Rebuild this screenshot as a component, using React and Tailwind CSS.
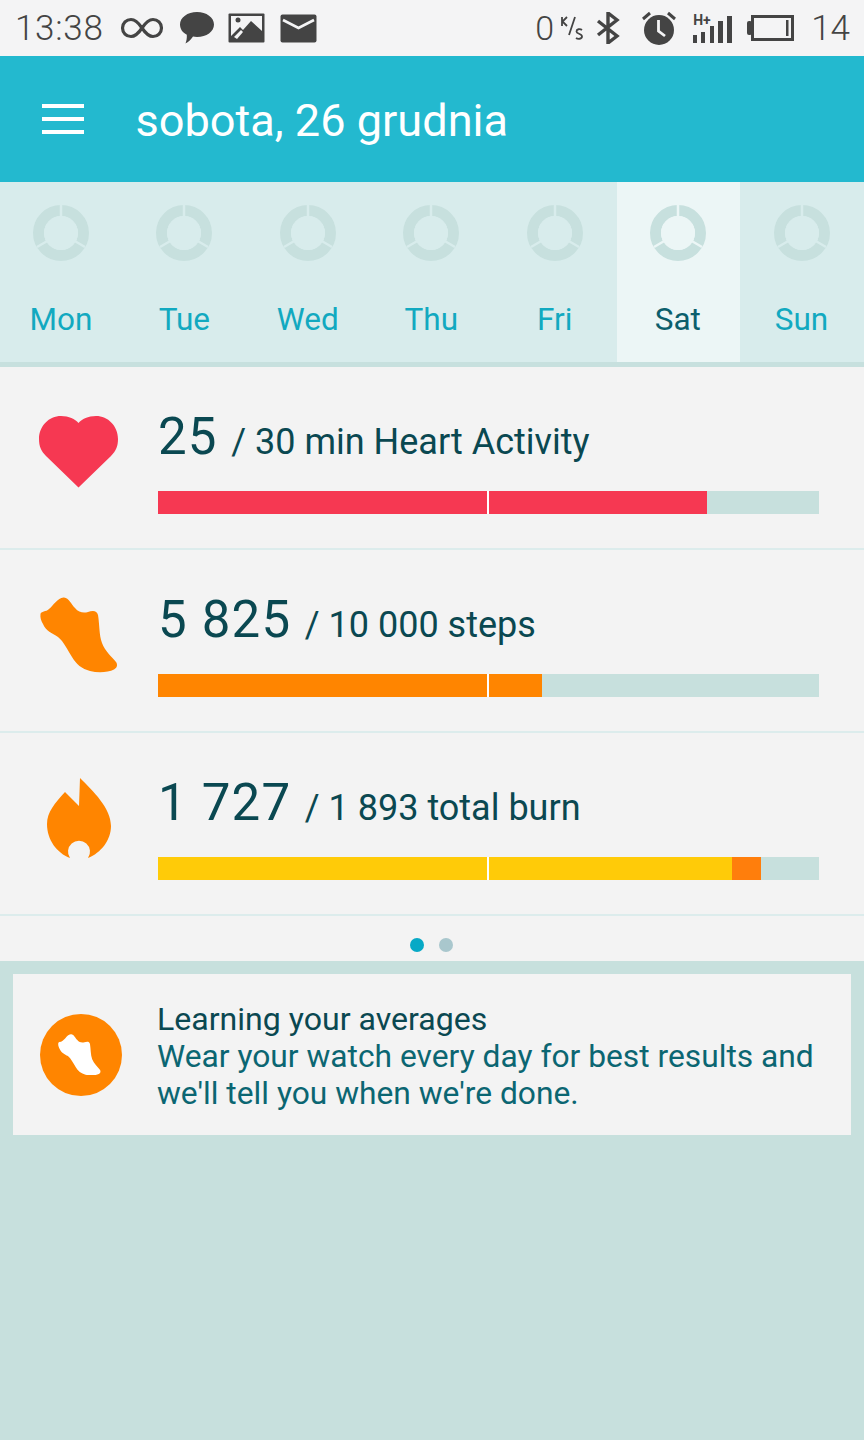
import React from 'react';

const days = ['Mon', 'Tue', 'Wed', 'Thu', 'Fri', 'Sat', 'Sun'];

function Ring() {
  return (
    <svg width="58" height="58" viewBox="0 0 58 58">
      <circle cx="29" cy="29" r="22.5" fill="none" stroke="#c7e0de" strokeWidth="11" />
      <path d="M29 0V16M29 29L53 43M29 29L5 43" stroke="currentColor" strokeWidth="2.5" fill="none" />
      <circle cx="29" cy="29" r="17" fill="currentColor" />
    </svg>
  );
}

function StatusBar() {
  return (
    <div className="h-[56px] bg-[#f4f4f5] flex items-center text-[#444] pl-[15px] pr-[14px]">
      <span className="text-[35px] font-light leading-none tracking-[0.7px]">13:38</span>
      <svg className="ml-[16px]" width="44" height="24" viewBox="0 0 44 24" fill="none" stroke="#444" strokeWidth="3.2">
        <path d="M22 12C18 6 15 3.500 11 3.500A8.500 8.500 0 0 0 11 20.500C15 20.500 18 18 22 12C26 6 29 3.500 33 3.500A8.500 8.500 0 0 1 33 20.500C29 20.500 26 18 22 12Z" />
      </svg>
      <svg className="ml-[15px]" width="36" height="34" viewBox="0 0 36 34" fill="#444">
        <path d="M18 1C27.500 1 35 6.500 35 13.500C35 20.500 27.500 26 18 26C16.500 26 15 25.800 14 25.500C12.500 28 10 30.500 6.500 32.500C7.500 30 8 27.500 7.800 23.800C3.500 21.500 1 17.800 1 13.500C1 6.500 8.500 1 18 1Z" />
      </svg>
      <svg className="ml-[13px]" width="37" height="30" viewBox="0 0 37 30">
        <rect x="0.500" y="0.500" width="36" height="29" rx="1" fill="#444" />
        <rect x="3" y="3" width="31" height="24" fill="#f4f4f5" />
        <path d="M3 27V23L12 14L15 17L23 8L34 18V27Z" fill="#444" />
        <circle cx="10" cy="7" r="2.500" fill="#444" />
        <path d="M6 24L13 17L15 19L9 26Z" fill="#f4f4f5" />
      </svg>
      <svg className="ml-[15px]" width="37" height="29" viewBox="0 0 37 29">
        <rect x="0.500" y="0.500" width="36" height="28" rx="2" fill="#444" />
        <path d="M3 6L18.500 14L34 6" fill="none" stroke="#f4f4f5" strokeWidth="2.600" />
      </svg>
      <span className="ml-auto text-[34px] font-light leading-none">0</span>
      <span className="ml-[6px] w-[24px] h-[28px] leading-none flex items-start">
        <svg width="24" height="28" viewBox="0 0 24 28" fill="none" stroke="#444" strokeWidth="1.800">
          <path d="M2 3V12M7 3L2.500 7.500L7 12M15 3L9 21" />
          <path d="M22 16C20 14.500 16.500 15 16.500 17.500C16.500 20 22 19.500 22 22.500C22 25 18 25.500 16 24" />
        </svg>
      </span>
      <svg className="ml-[12px]" width="24" height="32" viewBox="0 0 24 32" fill="none" stroke="#444" strokeWidth="3.400">
        <path d="M2 9L21 24L12 31V1L21 8L2 23" />
      </svg>
      <svg className="ml-[21px]" width="36" height="34" viewBox="0 0 36 34">
        <circle cx="18" cy="19" r="15" fill="#444" />
        <path d="M17.500 9V20L24 25" fill="none" stroke="#f4f4f5" strokeWidth="2.800" />
        <path d="M2 8L9 2M34 8L27 2" stroke="#444" strokeWidth="3" />
      </svg>
      <div className="ml-[16px] relative w-[39px] h-[30px] flex items-end gap-[4.25px]">
        <span className="absolute left-0 top-0 text-[#444] text-[14px] font-bold leading-none">H+</span>
        <span className="w-[4px] h-[8px] bg-[#444]" />
        <span className="w-[4px] h-[11px] bg-[#444]" />
        <span className="w-[4px] h-[17px] bg-[#444]" />
        <span className="w-[5px] h-[22px] bg-[#444]" />
        <span className="w-[5px] h-[27px] bg-[#444]" />
      </div>
      <svg className="ml-[15px]" width="47" height="26" viewBox="0 0 47 26">
        <rect x="0" y="6" width="5" height="14" rx="2" fill="#444" />
        <rect x="5.500" y="1.500" width="40" height="23" fill="none" stroke="#444" strokeWidth="3" />
        <rect x="39" y="5" width="2.500" height="16" fill="#444" />
      </svg>
      <span className="ml-[17px] text-[35px] font-light leading-none">14</span>
    </div>
  );
}

function DayStrip() {
  return (
    <div className="grid grid-cols-7 h-[185px] bg-[#d8ecec] border-b-[5px] border-[#c7e0de]">
      {days.map((d) => {
        const active = d === 'Sat';
        return (
          <div key={d} className={`flex flex-col items-center pt-[22px] ${active ? 'pr-[1px] mr-[1px] bg-[#ecf6f6] text-[#ecf6f6]' : 'pr-[1.5px] text-[#d8ecec]'}`}>
            <Ring />
            <span className={`mt-[38px] text-[31.5px] leading-[40px] ${active ? 'text-[#0c5f6c]' : 'text-[#12a9c0]'}`}>{d}</span>
          </div>
        );
      })}
    </div>
  );
}

function Heart() {
  return (
    <svg className="mt-[2px]" width="79" height="72" viewBox="0 0 79 72" fill="#f63852">
      <path d="M39.500 71.500L7 40C2 35 0 30 0 23C0 10 10 0 22 0C30 0 36 3 39.500 7C43 3 49 0 57 0C69 0 79 10 79 23C79 30 77 35 72 40Z" />
    </svg>
  );
}

function Shoe({ color = '#ff8500', width = 78 }) {
  return (
    <svg width={width} height={(width * 76) / 78} viewBox="0 0 78 76" fill={color}>
      <path d="M0.500 17C1 14 6 15 9 12C13 9 18 0 24 0.500C29 1 31 7 35 11C39 16 44 16 48 15C52 13.500 57 13 58 18C59.500 26 59 38 62 46C65 54 72 60 76 65C78 68 77 71 74 72.500C68 75.500 58 76 50 74C42 72 36 67 32 60C27 52 24 45 18 40C12 36 6 34 3 27C1 24 0 20 0.500 17Z" />
    </svg>
  );
}

function Flame() {
  return (
    <svg className="-mt-[2px]" width="64" height="80" viewBox="0 0 64 80" fill="#ff8500">
      <path d="M33 0L32 28L18 14C8 25 0 34 0 46C0 62 10 75 23 80A11 11 0 1 1 41 80C54 75 64 62 64 48C64 30 46 13 33 0Z" />
    </svg>
  );
}

function Bar({ children }) {
  return <div className="flex h-[23px] w-[661.5px] bg-[#c7e0dd]">{children}</div>;
}

function Row({ icon, value, goal, children }) {
  return (
    <div className="h-[183px] border-b-[2px] border-[#dcecec] flex">
      <div className="w-[157.5px] shrink-0 flex justify-center pt-[47px] items-start">{icon}</div>
      <div className="flex flex-col">
        <div className="h-[124px] pt-[14px] flex items-center text-[#0a4851]">
          <span className="text-[51px] leading-none tracking-[1.2px] ml-[0.5px]">{value}</span>
          <span className="text-[36px] leading-none ml-[13.5px] mt-[12px]">{goal}</span>
        </div>
        <Bar>{children}</Bar>
      </div>
    </div>
  );
}

export default function App() {
  return (
    <div className="w-[864px] h-[1440px] bg-[#c7e0dd] font-['Roboto',sans-serif] overflow-hidden">
      <StatusBar />
      <div className="h-[126px] bg-[#23b9cf] flex items-center text-white">
        <div className="ml-[42px] w-[42px] flex flex-col gap-[9px]">
          <span className="h-[4px] bg-white" />
          <span className="h-[4px] bg-white" />
          <span className="h-[4px] bg-white" />
        </div>
        <span className="ml-[51.5px] pt-[3px] text-[45.1px] leading-none">sobota, 26 grudnia</span>
      </div>
      <DayStrip />
      <div className="bg-[#f3f3f3]">
        <Row icon={<Heart />} value="25" goal="/ 30 min Heart Activity">
          <div className="w-[329.5px] bg-[#f63852]" />
          <div className="w-[2px] bg-white" />
          <div className="w-[218px] bg-[#f63852]" />
        </Row>
        <Row icon={<Shoe />} value="5 825" goal="/ 10 000 steps">
          <div className="w-[329.5px] bg-[#ff8500]" />
          <div className="w-[2px] bg-white" />
          <div className="w-[52.5px] bg-[#ff8500]" />
        </Row>
        <Row icon={<Flame />} value="1 727" goal="/ 1 893 total burn">
          <div className="w-[329.5px] bg-[#ffcb08]" />
          <div className="w-[2px] bg-white" />
          <div className="w-[243px] bg-[#ffcb08]" />
          <div className="w-[29px] bg-[#ff7e0c]" />
        </Row>
        <div className="h-[45px] pt-[13px] flex items-center justify-center gap-[15px] pr-[1px]">
          <span className="w-[14px] h-[14px] rounded-full bg-[#07a9c6]" />
          <span className="w-[14px] h-[14px] rounded-full bg-[#a9c7cd]" />
        </div>
      </div>
      <div className="mx-[13px] mt-[13px] h-[161px] bg-[#f3f3f3] flex items-center">
        <div className="ml-[27px] w-[82px] h-[82px] rounded-full bg-[#ff8500] flex items-center justify-center pr-[3px]">
          <Shoe color="#ffffff" width={43} />
        </div>
        <div className="ml-[35px] pt-[4px] text-[31.75px] leading-[37px] text-[#0b6672]">
          <div className="text-[32.1px] text-[#0a4851]">Learning your averages</div>
          <div>Wear your watch every day for best results and</div>
          <div>we'll tell you when we're done.</div>
        </div>
      </div>
    </div>
  );
}
